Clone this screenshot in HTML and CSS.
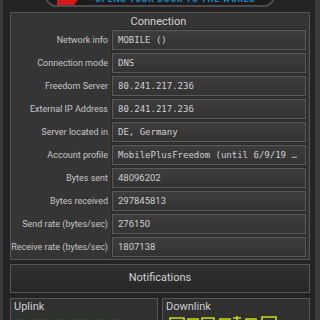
FILE: index.html
```html
<!DOCTYPE html>
<html>

<head>
  <meta charset="UTF-8">
  <meta name="viewport" content="width=device-width, initial-scale=1.0">
  <title>Freedom - Status</title>
  <link rel="stylesheet" href="styles.css">
</head>

<body>
  <div class="edge"></div>
  <div class="main">
    <div class="header">
      <div class="banner">
        <svg class="logo" width="26" height="12" viewBox="0 0 26 12">
          <polygon points="0,0 26,0 17,12 0,12" fill="#d81818" />
          <polygon points="2,0 10,0 4,6" fill="#ff3a2a" />
        </svg>
        <span class="slogan">OPENS YOUR DOOR TO THE WORLD</span>
      </div>
    </div>

    <div class="panel connection">
      <h3>Connection</h3>
      <div class="rows">
        <label>Network info</label>
        <div class="value mono">MOBILE ()</div>
        <label>Connection mode</label>
        <div class="value mono">DNS</div>
        <label>Freedom Server</label>
        <div class="value mono">80.241.217.236</div>
        <label>External IP Address</label>
        <div class="value mono">80.241.217.236</div>
        <label>Server located in</label>
        <div class="value mono">DE, Germany</div>
        <label>Account profile</label>
        <div class="value mono">MobilePlusFreedom (until 6/9/19 4:00 PM)</div>
        <label>Bytes sent</label>
        <div class="value">48096202</div>
        <label>Bytes received</label>
        <div class="value">297845813</div>
        <label>Send rate (bytes/sec)</label>
        <div class="value">276150</div>
        <label>Receive rate (bytes/sec)</label>
        <div class="value">1807138</div>
      </div>
    </div>

    <div class="panel notifications">
      <h3>Notifications</h3>
    </div>

    <div class="graphs">
      <div class="graph">
        <h4>Uplink</h4>
        <svg class="plot" width="110" height="8" viewBox="0 0 110 8">
          <rect x="0" y="4" width="104" height="4" fill="#1f3a1c" />
          <path d="M0 4 H104" stroke="#2f5a2a" stroke-width="1" stroke-dasharray="3 2" />
        </svg>
      </div>
      <div class="graph">
        <h4>Downlink</h4>
        <svg class="plot" width="112" height="8" viewBox="0 0 112 8">
          <g fill="none" stroke="#c6dc12" stroke-width="1.6">
            <path d="M2 8 V2 H16 V8" />
            <path d="M20 8 V3 H30 V8" />
            <path d="M34 8 V2 H46 V8" />
            <path d="M52 8 V3 H62 V8" />
            <path d="M69 8 V0 M65 2 H73" />
            <path d="M78 8 V3 H88 V8" />
            <path d="M94 8 V1 H108 V8" />
          </g>
        </svg>
      </div>
    </div>
  </div>
  <div class="track"></div>
</body>

</html>
```

FILE: styles.css
```css
* {
  padding: 0;
  margin: 0;
  box-sizing: border-box;
}

body {
  width: 320px;
  height: 320px;
  overflow: hidden;
  background: #242424;
  display: flex;
  font-family: Roboto, "Liberation Sans", sans-serif;
  color: #c8c8c8;
}

.edge {
  width: 3px;
  background: #3a3a3a;
}

.track {
  width: 5px;
  margin-left: 5px;
  background: #3a3a3a;
}

.main {
  flex: 1;
  padding-left: 7px;
  display: flex;
  flex-direction: column;
}

.main > * {
  flex-shrink: 0;
}

.header {
  height: 12px;
  overflow: hidden;
  display: flex;
  justify-content: center;
}

.banner {
  width: 230px;
  height: 24px;
  margin-top: -17px;
  border: 2px solid #4c4c4c;
  border-radius: 11px;
  background: #1c1c1c;
  display: flex;
  align-items: flex-end;
  padding: 0 6px 1px 10px;
  overflow: hidden;
}

.logo {
  flex-shrink: 0;
  margin-bottom: -1px;
}

.slogan {
  margin-left: 12px;
  font-size: 8.5px;
  font-weight: bold;
  letter-spacing: 0.8px;
  color: #1b8fd2;
  line-height: 9px;
  white-space: nowrap;
}

.panel {
  border: 1px solid #565656;
  background: #353535;
}

.panel h3 {
  font-size: 11px;
  font-weight: normal;
  text-align: center;
  color: #d2d2d2;
}

.connection {
  padding: 0 3px 2px 0;
}

.connection h3 {
  height: 17px;
  line-height: 18px;
}

.rows {
  display: grid;
  grid-template-columns: 97px 1fr;
  column-gap: 4px;
  row-gap: 3px;
}

.rows label {
  font-size: 9px;
  text-align: right;
  line-height: 20px;
  white-space: nowrap;
  color: #c6c6c6;
}

.value {
  height: 20px;
  border: 1px solid #5a5a5a;
  box-shadow: 0 0 0 1px #2a2a2a;
  background: linear-gradient(#3d3d3d, #333333);
  padding: 0 5px;
  font-size: 9.5px;
  line-height: 18px;
  color: #d0d0d0;
  white-space: nowrap;
  overflow: hidden;
  text-overflow: ellipsis;
}

.value.mono {
  font-family: "DejaVu Sans Mono", "Liberation Mono", monospace;
  font-size: 9px;
}

.notifications {
  margin-top: 4px;
  height: 29px;
  background: linear-gradient(#323232, #262626);
}

.notifications h3 {
  line-height: 25px;
}

.graphs {
  margin-top: 5px;
  height: 30px;
  display: grid;
  grid-template-columns: 1fr 1fr;
  column-gap: 4px;
}

.graph {
  border: 1px solid #565656;
  border-bottom: none;
  background: #303030;
  padding: 1px 3px 0;
  display: flex;
  flex-direction: column;
}

.graph h4 {
  font-size: 11px;
  font-weight: normal;
  color: #cfcfcf;
  line-height: 14px;
}

.plot {
  margin-left: 2px;
  margin-top: 2px;
}
```
